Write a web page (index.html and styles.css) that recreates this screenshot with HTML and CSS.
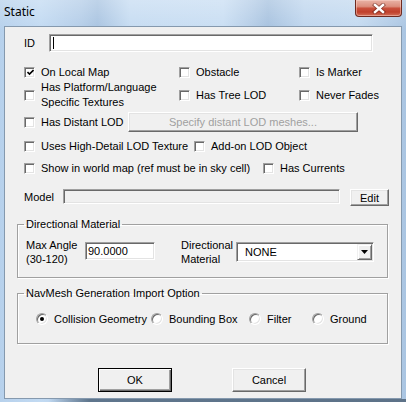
FILE: index.html
```html
<!DOCTYPE html>
<html>
<head>
<meta charset="utf-8">
<link rel="stylesheet" href="styles.css">
</head>
<body>
<div class="window">
  <div class="titlebar">
    <span class="title">Static</span>
    <div class="close">
      <svg width="14" height="11" viewBox="0 0 14 11">
        <path d="M3 2 L11 9 M11 2 L3 9" stroke="#5a1a10" stroke-opacity="0.55" stroke-width="4.2" stroke-linecap="square"/>
        <path d="M3 2 L11 9 M11 2 L3 9" stroke="#fff" stroke-width="2.4" stroke-linecap="square"/>
      </svg>
    </div>
  </div>
  <div class="client">
    <div class="row r-id">
      <span class="lbl-id">ID</span>
      <div class="field id-field"><span class="caret"></span></div>
    </div>

    <div class="row r1">
      <label class="chk col1"><span class="cb"><svg width="7" height="7" viewBox="0 0 7 7"><path d="M0.5 3 L2.5 5 L6.5 1" fill="none" stroke="#000" stroke-width="1.6"/></svg></span>On Local Map</label>
      <label class="chk col2"><span class="cb"></span>Obstacle</label>
      <label class="chk"><span class="cb"></span>Is Marker</label>
    </div>

    <div class="row r2">
      <label class="chk col1"><span class="cb"></span><span class="two">Has Platform/Language<br>Specific Textures</span></label>
      <label class="chk col2"><span class="cb"></span>Has Tree LOD</label>
      <label class="chk"><span class="cb"></span>Never Fades</label>
    </div>

    <div class="row r3">
      <label class="chk col-lod"><span class="cb"></span>Has Distant LOD</label>
      <div class="btn disabled lod-btn">Specify distant LOD meshes...</div>
    </div>

    <div class="row r4">
      <label class="chk col-hd"><span class="cb"></span>Uses High-Detail LOD Texture</label>
      <label class="chk"><span class="cb"></span>Add-on LOD Object</label>
    </div>

    <div class="row r5">
      <label class="chk col-wm"><span class="cb"></span>Show in world map (ref must be in sky cell)</label>
      <label class="chk"><span class="cb"></span>Has Currents</label>
    </div>

    <div class="row r-model">
      <span class="lbl-model">Model</span>
      <div class="field model-field"></div>
      <div class="btn edit-btn">Edit</div>
    </div>

    <fieldset class="group g1">
      <legend>Directional Material</legend>
      <div class="g1-row">
        <span class="lbl-two lbl-angle">Max Angle<br>(30-120)</span>
        <div class="field angle-field">90.0000</div>
        <span class="lbl-two lbl-dir">Directional<br>Material</span>
        <div class="field select">
          <span class="sel-text">NONE</span>
          <span class="sel-arrow"><svg width="7" height="4" viewBox="0 0 7 4"><path d="M0 0 H7 L3.5 4 Z" fill="#000"/></svg></span>
        </div>
      </div>
    </fieldset>

    <fieldset class="group g2">
      <legend>NavMesh Generation Import Option</legend>
      <div class="g2-row">
        <label class="rad rc1"><span class="rb on"></span>Collision Geometry</label>
        <label class="rad rc2"><span class="rb"></span>Bounding Box</label>
        <label class="rad rc3"><span class="rb"></span>Filter</label>
        <label class="rad"><span class="rb"></span>Ground</label>
      </div>
    </fieldset>

    <div class="row r-buttons">
      <div class="btn default main-btn">OK</div>
      <div class="btn main-btn">Cancel</div>
    </div>
  </div>
</div>
</body>
</html>
```

FILE: styles.css
```css
html, body {
  margin: 0;
  padding: 0;
}

body {
  width: 406px;
  height: 402px;
  overflow: hidden;
  font-family: "Liberation Sans", Arial, sans-serif;
  font-size: 11px;
  color: #000;
}

.window {
  width: 406px;
  height: 402px;
  display: flex;
  flex-direction: column;
  background:
    linear-gradient(to right, rgba(120,145,170,0) 0%, rgba(120,145,170,0) 12%, rgba(95,118,141,1) 22%, rgba(93,114,136,1) 100%) bottom / 100% 3px no-repeat,
    linear-gradient(to bottom, rgba(255,255,255,0.25), rgba(255,255,255,0) 30px),
    linear-gradient(to right, #b7d1ec 0%, #c2daf2 10%, #b4cde8 20%, #a9c4e1 24%, #c6dcf2 32%, #c9def3 55%, #b5cde7 62%, #a7c2df 66%, #bfd6ee 75%, #c4daf0 88%, #aac5e2 100%);
}

.titlebar {
  height: 26px;
  display: flex;
  justify-content: space-between;
  align-items: flex-start;
  flex: none;
}

.title {
  font-family: "Noto Sans", "Open Sans", sans-serif;
  font-size: 12px;
  line-height: 16px;
  padding: 4px 0 0 4px;
  color: #000;
}

.close {
  width: 47px;
  height: 17px;
  margin-right: 4px;
  box-sizing: border-box;
  border: 1px solid #6e2a20;
  border-top: none;
  border-radius: 0 0 4px 4px;
  background: linear-gradient(to bottom, #e9b3a6 0%, #dc8f7e 40%, #c9503c 52%, #c0402c 75%, #d3705a 100%);
  box-shadow: inset 0 0 0 1px rgba(255,220,210,0.45);
  display: flex;
  align-items: center;
  justify-content: center;
}

.close svg {
  display: block;
}

.client {
  flex: none;
  height: 373px;
  margin: 0 4px 0 4px;
  box-sizing: border-box;
  border: 1px solid #8599ae;
  background: #f0f0f0;
  padding: 7px 0 0 12px;
}

.row {
  display: flex;
  align-items: center;
  padding-left: 7px;
}

/* ID row */
.r-id { height: 18px; }
.lbl-id { width: 25px; }
.field {
  box-sizing: border-box;
  border: 1px solid;
  border-color: #a0a0a0 #fff #fff #a0a0a0;
  box-shadow: inset 1px 1px 0 #696969, inset -1px -1px 0 #e3e3e3;
  background: #fff;
}
.id-field {
  width: 324px;
  height: 18px;
  display: flex;
  align-items: center;
  padding-left: 3px;
}
.caret {
  width: 1px;
  height: 12px;
  background: #000;
}

/* checkbox rows */
.r1 { height: 16px; margin-top: 12px; }
.r2 { height: 30px; }
.r3 { height: 20px; margin-top: 2px; }
.r4 { height: 16px; margin-top: 6px; }
.r5 { height: 16px; margin-top: 6px; }

.chk {
  display: flex;
  align-items: center;
  white-space: nowrap;
}
.col1 { width: 155px; }
.col2 { width: 120px; }
.col-lod { width: 104px; }
.col-hd { width: 170px; }
.col-wm { width: 239px; }

.two { line-height: 15px; }

.cb {
  flex: none;
  width: 11px;
  height: 11px;
  box-sizing: border-box;
  margin-right: 6px;
  border: 1px solid;
  border-color: #a0a0a0 #fff #fff #a0a0a0;
  box-shadow: inset 1px 1px 0 #696969, inset -1px -1px 0 #e3e3e3;
  background: #fff;
  display: flex;
  align-items: center;
  justify-content: center;
}
.cb svg { display: block; margin: 1px 0 0 1px; }

/* buttons */
.btn {
  box-sizing: border-box;
  background: #f0f0f0;
  border: 1px solid;
  border-color: #fff #696969 #696969 #fff;
  box-shadow: inset -1px -1px 0 #a0a0a0, inset 1px 1px 0 #e3e3e3;
  display: flex;
  align-items: center;
  justify-content: center;
  white-space: nowrap;
}
.btn.disabled { color: #a0a0a0; }
.btn.default {
  border-color: #000;
  box-shadow: inset 1px 1px 0 #fff, inset -1px -1px 0 #696969, inset -2px -2px 0 #a0a0a0;
}
.lod-btn {
  width: 230px;
  height: 20px;
}

/* model */
.r-model {
  height: 17px;
  margin-top: 13px;
  align-items: flex-start;
}
.lbl-model {
  width: 39px;
  line-height: 17px;
}
.model-field {
  width: 277px;
  height: 15px;
  background: #f0f0f0;
}
.edit-btn {
  width: 39px;
  height: 17px;
  margin-left: 10px;
}

/* groups */
.group {
  box-sizing: border-box;
  width: 371px;
  margin: 0;
  border: 1px solid #a0a0a0;
  box-shadow: inset 1px 1px 0 #fff, 1px 1px 0 #fff;
  min-inline-size: 0;
}
.group legend {
  padding: 0 2px;
  margin-left: 0;
  line-height: 13px;
}

.g1 {
  margin-top: 12px;
  height: 60px;
  padding: 11px 0 0 6px;
}
.g1-row {
  display: flex;
  align-items: center;
  height: 20px;
  padding-left: 2px;
}
.lbl-two { line-height: 14px; }
.lbl-angle { width: 59px; }
.angle-field {
  width: 70px;
  height: 18px;
  padding-left: 2px;
  line-height: 16px;
  align-self: flex-start;
}
.lbl-dir {
  width: 55px;
  margin-left: 26px;
}
.select {
  width: 138px;
  height: 20px;
  display: flex;
  align-items: center;
  justify-content: space-between;
  padding: 1px 1px 1px 8px;
}
.sel-arrow {
  width: 15px;
  height: 16px;
  box-sizing: border-box;
  background: #f0f0f0;
  border: 1px solid;
  border-color: #f0f0f0 #696969 #696969 #f0f0f0;
  box-shadow: inset 1px 1px 0 #fff, inset -1px -1px 0 #a0a0a0;
  display: flex;
  align-items: center;
  justify-content: center;
}
.sel-arrow svg { display: block; }

.g2 {
  margin-top: 9px;
  height: 57px;
  padding: 11px 0 0 6px;
}
.g2-row {
  display: flex;
  align-items: center;
  height: 16px;
  padding-left: 12px;
}
.rad {
  display: flex;
  align-items: center;
  white-space: nowrap;
}
.rc1 { width: 115px; }
.rc2 { width: 98px; }
.rc3 { width: 63px; }
.rb {
  flex: none;
  width: 12px;
  height: 12px;
  box-sizing: border-box;
  margin-right: 6px;
  border-radius: 50%;
  border: 1px solid;
  border-color: #a0a0a0 #fff #fff #a0a0a0;
  box-shadow: inset 1px 1px 0 #696969, inset -1px -1px 0 #e3e3e3;
  background: #fff;
  display: flex;
  align-items: center;
  justify-content: center;
}
.rb.on::after {
  content: "";
  width: 4px;
  height: 4px;
  border-radius: 50%;
  background: #000;
}

/* bottom buttons */
.r-buttons {
  height: 24px;
  margin-top: 24px;
  padding-left: 81px;
  gap: 60px;
}
.main-btn {
  width: 74px;
  height: 24px;
}
```
